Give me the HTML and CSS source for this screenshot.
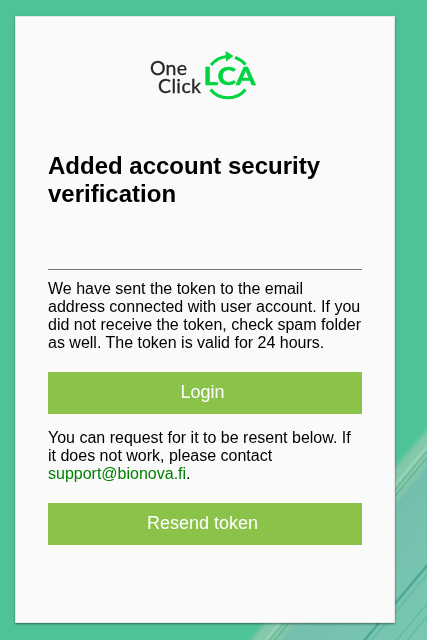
FILE: index.html
```html
<!DOCTYPE html>
<html lang="en">
<head>
    <meta charset="UTF-8">
    <meta name="viewport" content="width=device-width, initial-scale=1.0">
    <title>One Click LCA</title>
    <link rel="stylesheet" href="styles.css">
</head>
<body>
    <svg class="backdrop" viewBox="0 0 427 640" preserveAspectRatio="none" aria-hidden="true">
        <defs>
            <linearGradient id="glass" x1="0" y1="0" x2="1" y2="1">
                <stop offset="0.35" stop-color="#70bcab"/>
                <stop offset="1" stop-color="#7acab4"/>
            </linearGradient>
        </defs>
        <path class="soft" d="M432 424 L246 646 H440 Z" fill="#84c9aa"/>
        <path class="soft" d="M432 459 L274 648 H440 Z" fill="url(#glass)"/>
        <g fill="none">
            <path d="M430 443 L264 642" stroke="#94d3b5" stroke-width="3"/>
            <path d="M430 448 L268 642" stroke="#70b59b" stroke-width="1.3"/>
            <path d="M430 454 L273 642" stroke="#68b299" stroke-width="1.5"/>
            <path d="M430 461 L279 642" stroke="#82c3ab" stroke-width="2"/>
            <path d="M430 562 L363 642" stroke="#4ca895" stroke-width="2.5"/>
            <path d="M430 571 L370 642" stroke="#65b9a4" stroke-width="1.5"/>
            <path d="M430 600 L395 642" stroke="#65b9a4" stroke-width="1.5"/>
            <path d="M430 613 L406 642" stroke="#6bbda8" stroke-width="2"/>
        </g>
    </svg>

    <div class="container">
        <div class="logo">
            <svg width="106" height="50" viewBox="0 0 106 50" role="img" aria-label="One Click LCA">
                <text class="logo-name" x="0" y="25.3" textLength="37">One</text>
                <text class="logo-name" x="8" y="43" textLength="43">Click</text>
                <text class="logo-lca" x="53.5" y="35.3" textLength="52" lengthAdjust="spacingAndGlyphs">LCA</text>
                <g class="logo-ring">
                    <path d="M61 15 Q67 7.5 77 6.5"/>
                    <path d="M85 7.5 Q91 9.5 95.5 14.5"/>
                    <path d="M60.5 39.5 C69 50.5 87 50.5 95.5 39.5"/>
                </g>
                <path class="logo-arrow" d="M75.5 1 L83.5 6 L76 11.5 Z"/>
            </svg>
        </div>

        <h1>Added account security verification</h1>

        <div class="content">
            <p>We have sent the token to the email address connected with user account. If you did not receive the token, check spam folder as well. The token is valid for 24 hours.</p>
            <button class="action-button" type="button">Login</button>
            <p>You can request for it to be resent below. If it does not work, please contact <a href="mailto:support@bionova.fi">support@bionova.fi</a>.</p>
            <button class="action-button" type="button">Resend token</button>
        </div>
    </div>
</body>
</html>
```

FILE: styles.css
```css
* {
    box-sizing: border-box;
}
body {
    margin: 0;
    height: 640px;
    padding: 16px 32px 0 15px;
    overflow: hidden;
    background-color: #4fc398;
    font-family: "Liberation Sans", Arial, sans-serif;
    font-size: 16px;
    line-height: 18px;
    color: #000;
}
/* Diagonal glass pattern behind the card */
.backdrop {
    position: fixed;
    top: 0;
    left: 0;
    width: 100%;
    height: 100%;
    z-index: -1;
}
.soft {
    filter: blur(2px);
}
.container {
    width: 380px;
    height: 607px;
    padding: 33px 32px 0;
    background-color: #fafafa;
    border: 1px solid #e6e6e6;
    box-shadow: 0 1px 2px rgba(0, 0, 0, 0.45);
}
.logo {
    height: 50px;
    padding-left: 102px;
}
.logo svg {
    display: block;
}
.logo-name {
    font-family: Lato, sans-serif;
    font-size: 19.5px;
    fill: #262626;
    stroke: #262626;
    stroke-width: 0.3;
}
.logo-lca {
    font-family: Lato, sans-serif;
    font-size: 25px;
    font-weight: bold;
    fill: #00d540;
    stroke: #00d540;
    stroke-width: 0.5;
}
.logo-ring {
    fill: none;
    stroke: #00d540;
    stroke-width: 3;
}
.logo-arrow {
    fill: #00d540;
}
h1 {
    margin: 52px 0 0;
    font-size: 24px;
    line-height: 28px;
}
.content {
    margin-top: 61px;
    padding-top: 10px;
    border-top: 1px solid #777;
}
p {
    margin: 0 0 20px;
}
a {
    color: #008000;
    text-decoration: none;
}
.action-button {
    display: block;
    width: 100%;
    height: 42px;
    margin: 0 0 15px;
    padding: 0 5px 2px 0;
    border: none;
    background-color: #8bc34a;
    color: #fff;
    font-family: inherit;
    font-size: 18px;
    text-align: center;
    cursor: pointer;
}
```
